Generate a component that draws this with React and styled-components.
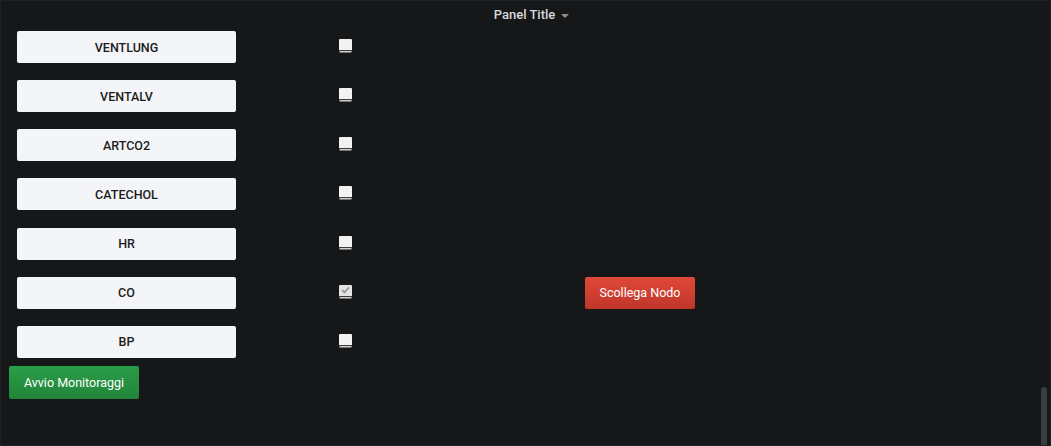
import React from "react";
import styled, { createGlobalStyle } from "styled-components";

const Global = createGlobalStyle`
  html, body { margin: 0; padding: 0; background: #161719; }
  body { font-family: Roboto, "Liberation Sans", sans-serif; }
`;

const Panel = styled.div`
  box-sizing: border-box;
  width: 1051px;
  height: 446px;
  background: #161719;
  border: 1px solid #1f2024;
  position: relative;
  overflow: hidden;
`;

const Header = styled.div`
  height: 29px;
  display: flex;
  align-items: center;
  justify-content: center;
  padding-left: 12px;
  padding-bottom: 2px;
  box-sizing: border-box;
  color: #d8d9da;
  font-size: 13px;
  font-weight: 500;
  gap: 6px;
`;

const Caret = styled.span`
  width: 0;
  height: 0;
  border-left: 4px solid transparent;
  border-right: 4px solid transparent;
  border-top: 4px solid #8e8e8e;
  margin-top: 2px;
`;

const Content = styled.div`
  padding: 0 8px;
`;

const Table = styled.div`
  display: grid;
  grid-template-columns: 219px 103px 13px 233px 110px;
  grid-auto-rows: 32px;
  row-gap: 17.17px;
  padding-left: 8px;
  padding-top: 1px;
  align-items: start;
`;

const NameButton = styled.div`
  grid-column: 1;
  height: 32px;
  background: #f4f5f8;
  border-radius: 2px;
  display: flex;
  align-items: center;
  justify-content: center;
  color: #1b1c20;
  font-size: 12.5px;
  font-weight: 500;
`;

const Check = styled.span`
  grid-column: 3;
  margin-top: 8px;
  width: 13px;
  height: 11px;
  background: ${(p) => (p.checked ? "#e4e4e4" : "#f2f2f2")};
  border-bottom: 1px solid #3c3c3c;
  box-shadow: 0 2px 0 -0.5px #d0d0d0;
  display: flex;
  align-items: center;
  justify-content: center;
  border-radius: 1px 1px 0 0;
`;

const RedButton = styled.div`
  grid-column: 5;
  height: 32px;
  border-radius: 2px;
  background: linear-gradient(to bottom, #e0483b, #bf3629);
  color: #fff;
  font-size: 12.5px;
  font-weight: 400;
  display: flex;
  align-items: center;
  justify-content: center;
`;

const GreenButton = styled.div`
  margin-top: 8px;
  width: 130px;
  height: 33px;
  border-radius: 2px;
  background: linear-gradient(to bottom, #2a9e48, #22843a);
  color: #fff;
  font-size: 12.5px;
  font-weight: 400;
  display: flex;
  align-items: center;
  justify-content: center;
`;

const Scrollbar = styled.div`
  position: absolute;
  right: 3px;
  bottom: 0;
  width: 6px;
  height: 58px;
  border-radius: 3px 3px 0 0;
  background: #3b3d45;
`;

const rows = ["VENTLUNG", "VENTALV", "ARTCO2", "CATECHOL", "HR", "CO", "BP"];

export default function App() {
  return (
    <>
      <Global />
      <Panel>
        <Header>
          <span>Panel Title</span>
          <Caret />
        </Header>
        <Content>
          <Table>
            {rows.map((name) => (
              <React.Fragment key={name}>
                <NameButton>{name}</NameButton>
                <Check checked={name === "CO"}>
                  {name === "CO" && (
                    <svg width="9" height="8" viewBox="0 0 9 8">
                      <path d="M1 4.2 L3.4 6.4 L8 1.4" fill="none" stroke="#9a9a9a" strokeWidth="1.8" />
                    </svg>
                  )}
                </Check>
                {name === "CO" && <RedButton>Scollega Nodo</RedButton>}
              </React.Fragment>
            ))}
          </Table>
          <GreenButton>Avvio Monitoraggi</GreenButton>
        </Content>
        <Scrollbar />
      </Panel>
    </>
  );
}
